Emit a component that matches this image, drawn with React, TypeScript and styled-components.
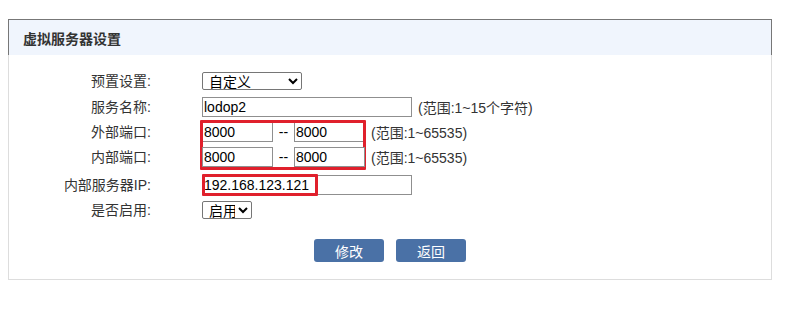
import React from 'react';
import styled, { createGlobalStyle } from 'styled-components';

const GlobalStyle = createGlobalStyle`
    body {
        margin: 0;
        background: #ffffff;
        font-family: "Liberation Sans", "Noto Sans CJK SC", sans-serif;
        font-size: 14px;
        color: #333333;
    }
`;

const Page = styled.div`
    padding: 19px 16px 0 8px;
`;

const Panel = styled.div`
    width: 764px;
    box-sizing: border-box;
`;

const Header = styled.div`
    height: 36px;
    box-sizing: border-box;
    border: 1px solid #777777;
    border-bottom: none;
    background-color: #f0f5fd;
    padding-left: 14px;
    display: flex;
    align-items: center;
    font-size: 14px;
    font-weight: bold;
    color: #333333;
`;

const Body = styled.div`
    border: 1px solid #dddddd;
    border-top: none;
    padding: 17px 0 17px 0;
`;

const Row = styled.div<{ $h: number; $gap: number }>`
    display: grid;
    grid-template-columns: 142px auto;
    column-gap: 51px;
    align-items: center;
    height: ${p => p.$h}px;
    margin-bottom: ${p => p.$gap}px;
`;

const Label = styled.label`
    text-align: right;
    white-space: nowrap;
    line-height: 16px;
`;

const Controls = styled.div`
    display: flex;
    align-items: center;
    height: 100%;
    position: relative;
`;

const Select = styled.select<{ $w: number }>`
    width: ${p => p.$w}px;
    height: 18px;
    box-sizing: border-box;
    padding: 0 0 0 2px;
    border: 1px solid #767676;
    border-radius: 2px;
    background: #ffffff;
    font-family: "Liberation Sans", "Noto Sans CJK SC", sans-serif;
    font-size: 14px;
    color: #000000;
`;

const Input = styled.input<{ $w: number }>`
    width: ${p => p.$w}px;
    height: 20px;
    box-sizing: border-box;
    padding: 0 1px;
    border: 1px solid #8f8f8f;
    border-radius: 0;
    font-family: "Liberation Sans", "Noto Sans CJK SC", sans-serif;
    font-size: 14px;
    color: #000000;
    outline: none;
`;

const Dash = styled.span`
    width: 21px;
    text-align: center;
    color: #000000;
`;

const Hint = styled.span`
    margin-left: 6px;
    white-space: nowrap;
    color: #333333;
`;

const Highlight = styled.span<{ $w: number; $h: number; $top: number; $left: number }>`
    position: absolute;
    top: ${p => p.$top}px;
    left: ${p => p.$left}px;
    width: ${p => p.$w}px;
    height: ${p => p.$h}px;
    box-sizing: border-box;
    border: 3px solid #e0202c;
    border-radius: 1px;
    pointer-events: none;
`;

const Actions = styled.div`
    display: flex;
    justify-content: center;
    gap: 12px;
    margin-top: 20px;
`;

const Button = styled.button`
    width: 70px;
    height: 23px;
    border: none;
    border-radius: 3px;
    background-color: #4a71a6;
    color: #ffffff;
    font-family: "Liberation Sans", "Noto Sans CJK SC", sans-serif;
    font-size: 14px;
    padding: 0;
    cursor: pointer;
`;

export default function App() {
    return (
        <>
            <GlobalStyle />
            <Page>
                <Panel>
                    <Header>虚拟服务器设置</Header>
                    <Body>
                        <Row $h={18} $gap={7}>
                            <Label>预置设置:</Label>
                            <Controls>
                                <Select $w={100} defaultValue='custom'>
                                    <option value='custom'>自定义</option>
                                </Select>
                            </Controls>
                        </Row>
                        <Row $h={20} $gap={5}>
                            <Label>服务名称:</Label>
                            <Controls>
                                <Input $w={210} defaultValue='lodop2' />
                                <Hint>(范围:1~15个字符)</Hint>
                            </Controls>
                        </Row>
                        <Row $h={20} $gap={5}>
                            <Label>外部端口:</Label>
                            <Controls>
                                <Input $w={71} defaultValue='8000' />
                                <Dash>--</Dash>
                                <Input $w={71} defaultValue='8000' />
                                <Hint>(范围:1~65535)</Hint>
                                <Highlight $top={-2} $left={-2} $w={166} $h={50} />
                            </Controls>
                        </Row>
                        <Row $h={20} $gap={8}>
                            <Label>内部端口:</Label>
                            <Controls>
                                <Input $w={71} defaultValue='8000' />
                                <Dash>--</Dash>
                                <Input $w={71} defaultValue='8000' />
                                <Hint>(范围:1~65535)</Hint>
                            </Controls>
                        </Row>
                        <Row $h={20} $gap={6}>
                            <Label>内部服务器IP:</Label>
                            <Controls>
                                <Input $w={210} defaultValue='192.168.123.121' />
                                <Highlight $top={-1} $left={0} $w={116} $h={22} />
                            </Controls>
                        </Row>
                        <Row $h={18} $gap={0}>
                            <Label>是否启用:</Label>
                            <Controls>
                                <Select $w={50} defaultValue='on'>
                                    <option value='on'>启用</option>
                                    <option value='off'>禁用</option>
                                </Select>
                            </Controls>
                        </Row>
                        <Actions>
                            <Button>修改</Button>
                            <Button>返回</Button>
                        </Actions>
                    </Body>
                </Panel>
            </Page>
        </>
    );
}
